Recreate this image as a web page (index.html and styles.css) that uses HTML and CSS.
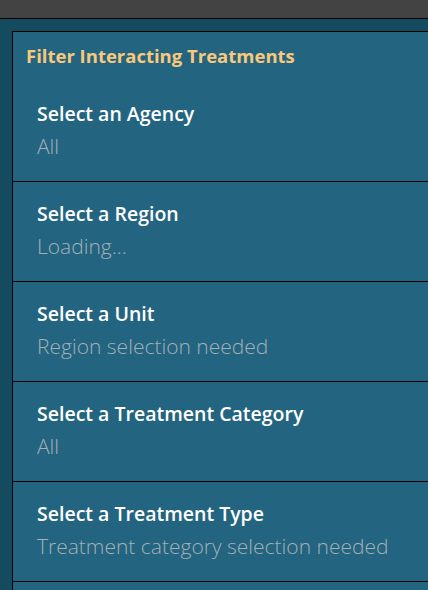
FILE: index.html
```html
<!DOCTYPE html>
<html lang="en">
<head>
<meta charset="utf-8">
<link rel="stylesheet" href="styles.css">
</head>
<body>
<div class="topbar"></div>
<div class="wrap">
  <div class="panel">
    <div class="panel-header">Filter Interacting Treatments</div>
    <div class="row">
      <div class="row-title">Select an Agency</div>
      <div class="row-value">All</div>
    </div>
    <div class="row">
      <div class="row-title">Select a Region</div>
      <div class="row-value">Loading...</div>
    </div>
    <div class="row">
      <div class="row-title">Select a Unit</div>
      <div class="row-value">Region selection needed</div>
    </div>
    <div class="row">
      <div class="row-title">Select a Treatment Category</div>
      <div class="row-value">All</div>
    </div>
    <div class="row">
      <div class="row-title">Select a Treatment Type</div>
      <div class="row-value">Treatment category selection needed</div>
    </div>
    <div class="row"></div>
  </div>
</div>
</body>
</html>
```
FILE: styles.css
```css
html, body {
  margin: 0;
  padding: 0;
  height: 100%;
  overflow: hidden;
}
body {
  background: #154b5f;
  font-family: "Open Sans", Lato, sans-serif;
}
.topbar {
  height: 18px;
  background: #434343;
  border-bottom: 1px solid #000;
}
.wrap {
  padding: 12px 0 0 12px;
  height: 559px;
  overflow: hidden;
}
.panel {
  background: #236480;
  border-top: 1px solid #000;
  border-left: 1px solid #000;
  height: 800px;
}
.panel-header {
  height: 50px;
  box-sizing: border-box;
  padding: 11px 0 0 13px;
  font-size: 18.5px;
  font-weight: 700;
  color: #f8c97c;
}
.row {
  height: 99px;
  border-bottom: 1px solid #000;
  padding-left: 24px;
  display: flex;
  flex-direction: column;
}
.row-title {
  margin-top: 19px;
  font-size: 19.5px;
  font-weight: 600;
  color: #ffffff;
  line-height: 26px;
}
.row-value {
  margin-top: 6px;
  font-size: 21px;
  font-weight: 300;
  color: #a3b0b7;
  line-height: 26px;
}
```
